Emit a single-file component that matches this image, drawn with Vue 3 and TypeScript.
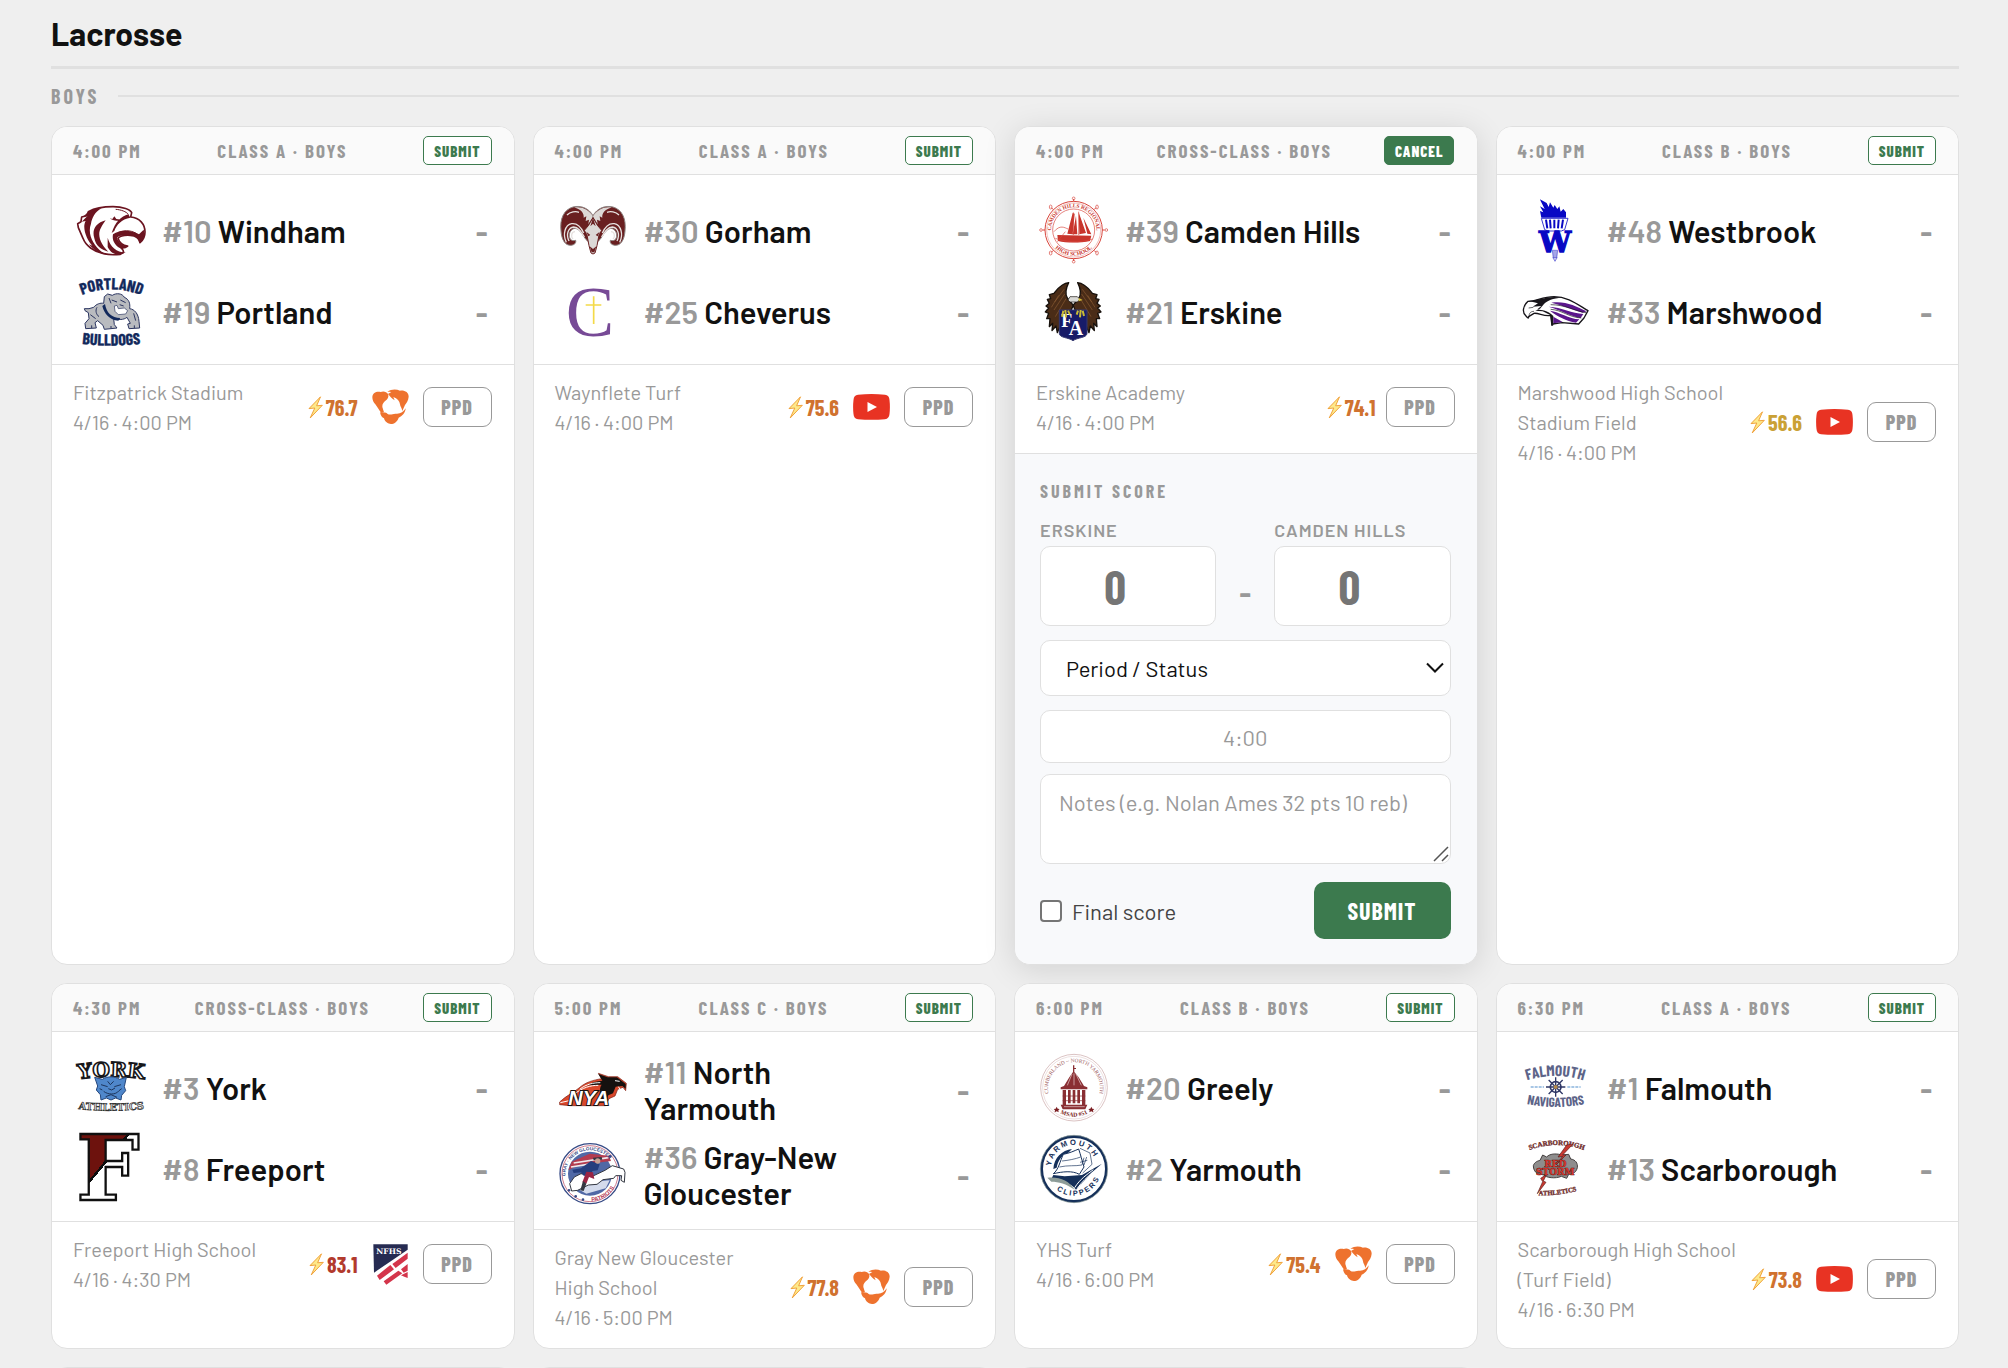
<script setup lang="ts">
import { ref } from 'vue'

type Stream = 'hudl' | 'youtube' | 'nfhs' | null

interface Team {
  rank: number
  name: string
  logo: string
}

interface Game {
  id: number
  time: string
  group: string
  away: Team
  home: Team
  venue: string
  rating: string
  heat: 'warm' | 'hot' | 'mild'
  stream: Stream
}

const games: Game[] = [
  { id: 1, time: '4:00 PM', group: 'Class A · Boys', away: { rank: 10, name: 'Windham', logo: 'windham' }, home: { rank: 19, name: 'Portland', logo: 'portland' }, venue: 'Fitzpatrick Stadium', rating: '76.7', heat: 'warm', stream: 'hudl' },
  { id: 2, time: '4:00 PM', group: 'Class A · Boys', away: { rank: 30, name: 'Gorham', logo: 'gorham' }, home: { rank: 25, name: 'Cheverus', logo: 'cheverus' }, venue: 'Waynflete Turf', rating: '75.6', heat: 'warm', stream: 'youtube' },
  { id: 3, time: '4:00 PM', group: 'Cross-Class · Boys', away: { rank: 39, name: 'Camden Hills', logo: 'camden' }, home: { rank: 21, name: 'Erskine', logo: 'erskine' }, venue: 'Erskine Academy', rating: '74.1', heat: 'warm', stream: null },
  { id: 4, time: '4:00 PM', group: 'Class B · Boys', away: { rank: 48, name: 'Westbrook', logo: 'westbrook' }, home: { rank: 33, name: 'Marshwood', logo: 'marshwood' }, venue: 'Marshwood High School Stadium Field', rating: '56.6', heat: 'mild', stream: 'youtube' },
  { id: 5, time: '4:30 PM', group: 'Cross-Class · Boys', away: { rank: 3, name: 'York', logo: 'york' }, home: { rank: 8, name: 'Freeport', logo: 'freeport' }, venue: 'Freeport High School', rating: '83.1', heat: 'hot', stream: 'nfhs' },
  { id: 6, time: '5:00 PM', group: 'Class C · Boys', away: { rank: 11, name: 'North Yarmouth', logo: 'nya' }, home: { rank: 36, name: 'Gray-New Gloucester', logo: 'gray' }, venue: 'Gray New Gloucester High\u00a0School', rating: '77.8', heat: 'warm', stream: 'hudl' },
  { id: 7, time: '6:00 PM', group: 'Class B · Boys', away: { rank: 20, name: 'Greely', logo: 'greely' }, home: { rank: 2, name: 'Yarmouth', logo: 'yarmouth' }, venue: 'YHS Turf', rating: '75.4', heat: 'warm', stream: 'hudl' },
  { id: 8, time: '6:30 PM', group: 'Class A · Boys', away: { rank: 1, name: 'Falmouth', logo: 'falmouth' }, home: { rank: 13, name: 'Scarborough', logo: 'scarborough' }, venue: 'Scarborough High School (Turf Field)', rating: '73.8', heat: 'warm', stream: 'youtube' },
]

const upcomingSlots = [9, 10, 11]

const openId = ref<number | null>(3)
const toggle = (id: number) => {
  openId.value = openId.value === id ? null : id
}

const slab = 'font-family="DejaVu Serif, serif" font-weight="700"'
const roman = 'font-family="Liberation Serif, serif" font-weight="700"'
const sans = 'font-family="Liberation Sans, sans-serif" font-weight="700"'
const narrow = 'font-family="Barlow Condensed, sans-serif" font-weight="700"'

/* School crests, all on a 204 unit square. */
const logos: Record<string, string> = {
  windham: `
    <path fill="#fff" stroke="#6b1420" stroke-width="5" stroke-linejoin="round" d="M34 44C60 30 88 29 108 29C138 29 160 38 164 47L161 60C188 62 204 82 204 105C204 118 198 130 189 137C187 124 178 116 160 115C144 114 128 118 123 124C128 140 140 146 152 147C146 152 138 153 132 152C138 160 146 165 130 172C112 174 96 174 80 170C50 164 26 146 18 124L4 92L2 80L12 74L14 60L30 56Z"/>
    <path fill="#6b1420" d="M60 34C46 38 36 44 34 44L20 58L32 56L14 74L26 72C14 92 30 130 46 146L36 142C50 160 70 172 90 173L74 164C50 146 30 112 42 80C46 62 52 46 74 34ZM86 70C56 78 44 98 52 124C56 146 72 158 94 164C74 144 58 116 72 92C76 84 80 78 86 70ZM98 64C108 72 122 74 134 68L118 66L112 58L106 66ZM154 52C132 58 114 76 104 108L112 102C118 84 134 66 160 62ZM108 112C128 98 160 98 186 112L200 98C206 118 198 130 188 139L182 124C166 110 130 112 120 122C126 138 138 146 152 148L130 154C116 146 104 132 108 112ZM92 122C100 150 118 166 146 166C126 178 104 174 92 150Z"/>
    <path fill="none" stroke="#6b1420" stroke-width="3" d="M116 37C132 38 148 44 154 52M124 106C146 98 168 100 184 114"/>`,
  portland: `
    <defs><path id="pt" d="M4 56Q103 12 204 56"/><path id="pb" d="M0 196Q103 210 206 196"/></defs>
    <text fill="#12295c" stroke="#12295c" stroke-width="1" ${narrow} font-size="48" text-anchor="middle"><textPath href="#pt" startOffset="50%">PORTLAND</textPath></text>
    <path fill="#b9bbbf" stroke="#2b3560" stroke-width="3" stroke-linejoin="round" d="M34 104L24 98L22 92L36 92L50 88C58 78 70 74 80 76L82 56L92 48L106 52C118 44 136 46 142 58C156 64 160 76 158 92C172 94 184 106 186 130L188 150L156 152L152 138L160 136L150 118C140 126 124 126 110 122L112 140L120 150L82 154L78 142L62 128L54 134L58 150L26 152L24 136L36 122Z"/>
    <path fill="#12295c" d="M84 78C88 104 104 120 130 120L124 128C98 126 82 108 76 84Z"/>
    <path fill="#fff" stroke="#2b3560" stroke-width="2" d="M112 84L120 82L124 92L142 90L152 98L146 108L124 110L114 100Z"/>
    <path fill="none" stroke="#2b3560" stroke-width="3" d="M104 66L120 72M130 66L146 74M128 80L140 84M96 60L102 76M40 110L56 122M170 106L176 128M44 142V150M102 144V151M172 142V150M60 88C54 98 58 110 66 116"/>
    <text fill="#12295c" stroke="#12295c" stroke-width="1" ${narrow} font-size="48" text-anchor="middle"><textPath href="#pb" startOffset="50%">BULLDOGS</textPath></text>`,
  gorham: `
    <g><path fill="#691f20" stroke="#8d8482" stroke-width="3" d="M102 56C90 34 66 24 42 30C14 38 2 66 6 102C8 128 18 146 36 145C46 144 52 138 50 130C36 134 28 124 32 108C36 96 48 90 58 98C70 106 74 124 88 134L102 140Z"/>
    <path fill="#dcd8d6" d="M102 58C88 36 66 28 46 32C66 36 76 48 74 62L82 58L80 72L90 68L88 82L100 62Z"/>
    <path fill="none" stroke="#e6e1df" stroke-width="4" d="M22 136C10 112 18 84 38 80C54 78 66 90 74 108M30 132C20 112 28 92 44 90C58 90 66 104 76 120M42 126C34 118 38 104 48 104M60 46C50 42 34 44 24 54"/></g>
    <g transform="matrix(-1 0 0 1 204 0)"><path fill="#691f20" stroke="#8d8482" stroke-width="3" d="M102 56C90 34 66 24 42 30C14 38 2 66 6 102C8 128 18 146 36 145C46 144 52 138 50 130C36 134 28 124 32 108C36 96 48 90 58 98C70 106 74 124 88 134L102 140Z"/>
    <path fill="#dcd8d6" d="M102 58C88 36 66 28 46 32C66 36 76 48 74 62L82 58L80 72L90 68L88 82L100 62Z"/>
    <path fill="none" stroke="#e6e1df" stroke-width="4" d="M22 136C10 112 18 84 38 80C54 78 66 90 74 108M30 132C20 112 28 92 44 90C58 90 66 104 76 120M42 126C34 118 38 104 48 104M60 46C50 42 34 44 24 54"/></g>
    <path fill="#dcd8d6" stroke="#691f20" stroke-width="3" d="M102 62L88 86L76 100L84 114L90 146L96 168L102 171L108 168L114 146L120 114L128 100L116 86Z"/>
    <path fill="#691f20" d="M102 62L94 88L102 80L110 88ZM82 104L94 114L88 118ZM122 104L110 114L116 118ZM92 148L102 156L112 148L106 166H98Z"/>`,
  cheverus: `
    <text x="20" y="173" font-family="Liberation Serif, serif" font-size="218" fill="#774a96">C</text>
    <path fill="none" stroke="#f4da48" stroke-width="5" d="M104 55V138M80 81H127"/>`,
  camden: `
    <defs><path id="ct" d="M36 119A68 68 0 1 1 166 119"/><path id="cb" d="M38 144A78 78 0 0 0 164 144"/></defs>
    <g fill="none" stroke="#d8453c"><circle cx="101" cy="99" r="86" stroke-width="3"/><circle cx="101" cy="99" r="81" stroke-width="1"/><circle cx="101" cy="99" r="63" stroke-width="2"/>
    <path stroke-width="3" d="M101 13V6M101 185V192M15 99H8M187 99H194M40 38L34 32M162 38L168 32M40 160L34 166M162 160L168 166"/>
    <g stroke-width="2"><circle cx="101" cy="4" r="4"/><circle cx="101" cy="194" r="4"/><circle cx="3" cy="99" r="4"/><circle cx="199" cy="99" r="4"/><ellipse cx="32" cy="30" rx="4" ry="6"/><ellipse cx="171" cy="30" rx="4" ry="6"/><ellipse cx="32" cy="168" rx="4" ry="6"/><ellipse cx="171" cy="168" rx="4" ry="6"/></g></g>
    <text fill="#c8352c" ${roman} font-size="16" text-anchor="middle"><textPath href="#ct" startOffset="50%">CAMDEN HILLS REGIONAL</textPath></text>
    <text fill="#c8352c" ${roman} font-size="17" text-anchor="middle"><textPath href="#cb" startOffset="50%">HIGH SCHOOL</textPath></text>
    <path fill="#c8352c" d="M98 48L104 50L98 112L82 110ZM108 56L112 112H98ZM116 46L138 108L118 112ZM130 62L154 112L142 110ZM52 114L154 116L150 132C120 138 80 138 54 132Z"/>
    <path fill="none" stroke="#d8453c" stroke-width="2" d="M100 46V114M116 44V114M42 104C60 82 74 92 84 96M46 124C70 134 120 140 158 126M52 134L76 104"/>`,
  erskine: `
    <g fill="#4a2c17" stroke="#17110c" stroke-width="4" stroke-linejoin="round"><path d="M86 14C64 16 52 34 42 46L28 50L32 62L22 64L28 76L18 84L26 90L16 102L26 106L20 122L30 122L28 146L38 136L36 158L48 144L52 164L62 140L92 100L100 82L82 60C74 46 78 30 86 14Z"/><path d="M113 14C135 16 147 34 157 46L171 50L167 62L177 64L171 76L181 84L173 90L183 102L173 106L179 122L169 122L171 146L161 136L163 158L151 144L147 164L137 140L107 100L99 82L117 60C125 46 121 30 113 14Z"/></g>
    <path fill="none" stroke="#8a5a32" stroke-width="2" d="M72 34L44 72M74 48L42 96M78 62L46 116M127 34L155 72M125 48L157 96M121 62L153 116M56 52L34 88M143 52L165 88"/>
    <path fill="#d9d9d6" stroke="#17110c" stroke-width="2" d="M90 56H112L120 64L112 72H90L84 66Z"/><path fill="#d6c134" d="M116 60L128 66L116 70Z"/>
    <path fill="#171b68" stroke="#34386f" stroke-width="3" d="M58 96H141V166C141 180 112 178 99 188C86 178 58 180 58 166Z"/>
    <g fill="#fff" ${roman}><text x="64" y="147" font-size="54">F</text><text x="86" y="170" font-size="60">A</text></g>
    <path fill="none" stroke="#c9bb35" stroke-width="6" d="M70 98L66 116M76 96L78 118M84 98L90 110M114 98L110 110M122 96L120 118M128 98L132 114"/>`,
  westbrook: `
    <path fill="#0808c4" d="M58 62L54 42L64 46L54 28L68 36L56 12L54 7L74 18L80 30L84 16L94 32L98 24L106 36L112 28L116 44L124 36L132 46V62Z"/>
    <path fill="#fff" stroke="#3a3ad0" stroke-width="3" d="M58 64H138L128 98L118 102H78L68 98Z"/>
    <path fill="none" stroke="#0808c4" stroke-width="6" d="M72 68L76 94M84 68L86 94M97 68V94M110 68L108 94M123 68L119 94"/>
    <text x="99" y="164" text-anchor="middle" ${slab} font-size="86" fill="#0808c4" stroke="#0808c4" stroke-width="4">W</text>
    <path fill="#d4d4f4" stroke="#4848cf" stroke-width="2" d="M91 160H107L104 184L99 193L94 184Z"/><path fill="none" stroke="#4848cf" stroke-width="2" d="M96 162V182M102 162V182M92 182H106"/>`,
  marshwood: `
    <path fill="#fff" stroke="#17151a" stroke-width="4" stroke-linejoin="round" d="M18 70C40 72 60 56 96 56C136 56 164 78 198 98L186 120L170 138L120 134L92 138L90 142L86 112C66 116 50 104 36 106L20 116C20 124 16 118 12 114C0 104 2 84 18 70Z"/>
    <path fill="#17151a" d="M18 68C50 70 80 50 120 60C92 60 76 68 66 78L54 92L40 98L62 100L86 112L88 142H94V114C76 96 60 98 46 94L58 84L32 86L48 76Z"/>
    <path fill="#5b168c" d="M88 74C130 68 160 84 194 100L182 104C150 94 126 84 88 74ZM80 86C120 88 150 106 184 108L176 120C144 114 120 98 80 86ZM84 98C112 102 140 122 172 124L162 134C132 128 108 116 84 98ZM94 116L122 132L94 136Z"/>
    <path fill="none" stroke="#17151a" stroke-width="2" d="M20 90L34 88M22 116C20 106 26 100 36 100M86 80C130 80 160 100 192 104M86 94C120 96 140 118 178 120"/>`,
  york: `
    <defs><path id="yt" d="M-10 78Q103 58 216 78"/><path id="ya" d="M-10 163Q103 178 216 163"/></defs>
    <text fill="#fff" stroke="#17171a" stroke-width="5" ${slab} font-size="60" text-anchor="middle"><textPath href="#yt" startOffset="50%">YORK</textPath></text>
    <path fill="#4f87cb" stroke="#25477d" stroke-width="3" d="M53 70L76 76C92 66 112 66 128 76L148 70L142 98L146 110L134 124L132 138L116 132L102 138L88 132L72 138L70 122L58 108L62 96Z"/>
    <path fill="none" stroke="#1d355c" stroke-width="3" d="M72 92L92 98M132 92L112 98M92 82L100 92L110 82M94 104L104 108L114 102M80 112C92 122 116 124 126 110M86 128L102 122L120 130M68 104L76 108M134 104L126 110"/>
    <text fill="#ddd" stroke="#333" stroke-width="2" ${slab} font-size="30" text-anchor="middle"><textPath href="#ya" startOffset="50%">ATHLETICS</textPath></text>`,
  freeport: `
    <defs><linearGradient id="ff" gradientUnits="userSpaceOnUse" x1="66" y1="80" x2="89" y2="99"><stop offset="0.4" stop-color="#6d120d"/><stop offset="0.4" stop-color="#0d0d0d"/><stop offset="0.65" stop-color="#0d0d0d"/><stop offset="0.65" stop-color="#fff"/></linearGradient></defs>
    <text x="-2" y="196" ${slab} font-size="268" fill="url(#ff)" stroke="#101010" stroke-width="7">F</text>`,
  nya: `
    <path fill="#d9482b" stroke="#7a1d12" stroke-width="2" d="M2 138C20 120 40 112 60 96C80 78 104 72 128 68L118 52L148 62L176 62L202 82L200 104L192 94L176 100L168 120L150 128L140 149H34L2 146Z"/>
    <path fill="#15110f" d="M118 54L146 64L174 64L200 84V98L190 90L170 92L162 112L148 118L138 140H120C124 110 120 96 128 86L84 88C98 78 112 76 130 74Z"/>
    <path fill="none" stroke="#fff" stroke-width="3" d="M62 100C82 84 104 80 124 80M44 116C70 94 96 88 118 88M168 74L182 76M178 92L186 104M4 140L30 134"/>
    <text x="28" y="146" ${sans} font-style="italic" font-size="60" fill="#fff" stroke="#15110f" stroke-width="6" paint-order="stroke">NYA</text>`,
  gray: `
    <defs><path id="gt" d="M24 130A74 74 0 1 1 164 76"/><path id="gb" d="M84 180A82 82 0 0 0 172 128"/></defs>
    <circle cx="93" cy="98" r="90" fill="#fff" stroke="#374b86" stroke-width="4"/><circle cx="93" cy="98" r="84" fill="none" stroke="#b53a54" stroke-width="2"/>
    <circle cx="93" cy="98" r="66" fill="#5068a5"/>
    <path fill="#b43c4f" d="M38 62L92 38L150 44L156 60L60 72L28 88Z"/><path stroke="#f0e9ec" stroke-width="5" fill="none" d="M44 66L148 50M36 78L100 68"/>
    <path fill="#d4dbec" d="M40 134L82 158L140 142L152 118L96 122Z"/>
    <path fill="#fff" stroke="#333741" stroke-width="3" d="M38 150L32 128L46 108L66 98L100 106L138 88L160 74L194 84L198 94L196 124L186 118L188 104L170 104L164 112L132 116L114 130L88 132L56 148Z"/>
    <path fill="#263e7e" d="M40 86L66 82L96 60L122 70L116 88L100 90L96 106L74 104L66 94L44 96Z"/><path fill="#9b2544" d="M82 92L102 94L106 114L90 108L82 128L70 124Z"/><path fill="#333741" d="M102 50L128 48L130 56L104 58ZM72 120L82 128L74 150L64 148Z"/><circle cx="116" cy="60" r="8" fill="#c7a093"/>
    <text fill="#374b86" ${sans} font-size="14" text-anchor="middle"><textPath href="#gt" startOffset="50%">GRAY · NEW GLOUCESTER</textPath></text>
    <text fill="#b53a54" ${sans} font-size="17" text-anchor="middle"><textPath href="#gb" startOffset="50%">PATRIOTS</textPath></text>
    <g fill="#374b86"><circle cx="30" cy="148" r="4"/><circle cx="50" cy="166" r="4"/><circle cx="72" cy="176" r="4"/><circle cx="154" cy="46" r="4"/></g>`,
  greely: `
    <defs><path id="rt" d="M29 130A78 78 0 1 1 175 130"/><path id="rb" d="M46 168A88 88 0 0 0 158 168"/></defs>
    <g fill="none" stroke="#c9a5a5"><circle cx="102" cy="101" r="100" stroke-width="2"/><circle cx="102" cy="101" r="94" stroke-width="1"/></g>
    <text fill="#9c5a5c" font-family="Liberation Serif, serif" font-size="16" text-anchor="middle"><textPath href="#rt" startOffset="50%">CUMBERLAND ~ NORTH YARMOUTH</textPath></text>
    <text fill="#7c1f23" ${roman} font-size="18" text-anchor="middle"><textPath href="#rb" startOffset="50%">MSAD #51</textPath></text>
    <path fill="#8a2f33" d="M99 34H103V42H108V45H103V54L116 70L132 96L142 100V106H62V100L72 96L88 70L99 54ZM68 108H78V152H68ZM84 108H92V148H84ZM98 108H106V148H98ZM112 108H120V148H112ZM126 108H136V152H126ZM62 152H142L136 166H68Z"/>
    <path fill="none" stroke="#e9cfd0" stroke-width="2" d="M96 60L82 94M102 58V94M108 60L124 94M72 158H134"/><path fill="none" stroke="#8a2f33" stroke-width="2" d="M68 126H136M68 140H136"/>
    <path fill="#7c1f23" d="M50 158l3 6 6 1-4 4 1 6-6-3-6 3 1-6-4-4 6-1ZM154 158l3 6 6 1-4 4 1 6-6-3-6 3 1-6-4-4 6-1Z"/>`,
  yarmouth: `
    <defs><path id="mt" d="M35 114A68 68 0 1 1 168 86"/><path id="mb" d="M38 152A82 82 0 0 0 182 116"/></defs>
    <circle cx="102" cy="102" r="97" fill="#fff" stroke="#15305a" stroke-width="8"/><circle cx="102" cy="102" r="101" fill="none" stroke="#8d9c98" stroke-width="2"/>
    <path fill="#15305a" d="M96 42C66 46 42 68 40 102L50 98C54 76 66 60 84 54ZM40 120L74 124L126 120L186 86L156 112L130 140L108 164C92 144 66 136 32 136Z"/>
    <path fill="#fff" stroke="#15305a" stroke-width="3" d="M70 58C90 54 102 48 116 42C122 60 126 76 132 96L118 118C96 106 68 110 40 116C56 104 60 78 70 58Z"/>
    <path fill="none" stroke="#15305a" stroke-width="2" d="M66 78C86 76 106 72 122 66M58 96C84 90 106 94 126 90M120 40L150 54L156 88L128 114M132 68L126 90M140 66L132 90M120 82L142 76"/>
    <path fill="#8d9c98" d="M22 128C56 124 88 136 104 164C78 146 56 140 34 140Z"/><path fill="none" stroke="#fff" stroke-width="3" d="M104 158C120 132 142 118 160 104M112 160C126 140 142 126 158 112"/>
    <text fill="#15305a" ${sans} text-anchor="middle" font-size="23"><textPath href="#mt" startOffset="50%">Y A R M O U T H</textPath></text>
    <text fill="#15305a" ${sans} font-size="22" text-anchor="middle"><textPath href="#mb" startOffset="50%">C L I P P E R S</textPath></text>`,
  falmouth: `
    <defs><path id="lt" d="M-4 86Q100 46 204 86"/><path id="lb" d="M-4 146Q100 172 206 146"/></defs>
    <text fill="#5d6488" ${narrow} font-size="46" text-anchor="middle"><textPath href="#lt" startOffset="50%">FALMOUTH</textPath></text>
    <text fill="#5d6488" ${narrow} font-size="40" text-anchor="middle"><textPath href="#lb" startOffset="50%">NAVIGATORS</textPath></text>
    <g fill="none" stroke="#2f3766"><circle cx="101" cy="99" r="16" stroke-width="5"/><path stroke-width="4" d="M101 70V128M72 99H130M80 78L122 120M122 78L80 120"/></g><circle cx="101" cy="99" r="6" fill="#b38a4d"/>
    <path fill="none" stroke="#8ab4dd" stroke-width="4" stroke-dasharray="9 3" d="M26 99H66M136 99H176"/>`,
  scarborough: `
    <defs><path id="st" d="M10 50Q104 10 198 50"/><path id="sb" d="M42 180Q104 184 172 166"/></defs>
    <text fill="#6e2a28" stroke="#6e2a28" stroke-width="1" ${roman} font-size="21" text-anchor="middle"><textPath href="#st" startOffset="50%">SCARBOROUGH</textPath></text>
    <path fill="#8e8d8d" stroke="#454040" stroke-width="3" d="M34 92C38 80 48 78 54 76L62 60L74 66C84 54 108 56 120 60L140 58L146 72C160 74 168 84 166 98C162 112 156 116 140 118L134 130L118 124C100 132 72 128 66 120L46 116C38 110 34 102 34 92Z"/>
    <path fill="#c93a31" stroke="#57201d" stroke-width="2" d="M154 26L134 30L108 66L122 64L104 88L132 60L122 60ZM74 118L56 130L62 140L46 176L72 142L64 138Z"/>
    <g fill="#d3342b" stroke="#4c1512" stroke-width="2" paint-order="stroke" ${slab} text-anchor="middle"><text x="100" y="95" font-size="27">RED</text><text x="100" y="119" font-size="27">STORM</text></g>
    <text fill="#6e2a28" stroke="#6e2a28" stroke-width="1" ${roman} font-size="20" text-anchor="middle"><textPath href="#sb" startOffset="50%">ATHLETICS</textPath></text>`,
}
</script>

<template>
  <main class="page">
    <h1 class="sport">Lacrosse</h1>
    <h2 class="division"><span>Boys</span></h2>

    <section class="grid" aria-label="Boys lacrosse games">
      <article v-for="g in games" :key="g.id" class="card" :class="{ open: openId === g.id }">
        <header class="card-head">
          <span>{{ g.time }}</span>
          <span>{{ g.group }}</span>
          <button type="button" class="toggle" :class="{ active: openId === g.id }" @click="toggle(g.id)">
            {{ openId === g.id ? 'Cancel' : 'Submit' }}
          </button>
        </header>

        <div class="teams">
          <div v-for="t in [g.away, g.home]" :key="t.name" class="team">
            <svg class="logo" viewBox="0 0 204 204" role="img" :aria-label="t.name" v-html="logos[t.logo]"></svg>
            <div class="name"><span class="rank">#{{ t.rank }}</span> {{ t.name }}</div>
            <div class="score">–</div>
          </div>
        </div>

        <footer class="card-foot">
          <div class="where">
            <div>{{ g.venue }}</div>
            <div>4/16 · {{ g.time }}</div>
          </div>
          <div class="rating" :class="g.heat">
            <svg class="bolt" viewBox="0 0 15 23" aria-hidden="true">
              <path d="M12.500.8L1 12.600L6.800 12L2.200 22L14.300 9.300L8.600 9.800Z" fill="#fde98a" stroke="#f0a23c" stroke-width="1" stroke-linejoin="round" />
            </svg>
            <span>{{ g.rating }}</span>
          </div>
          <a v-if="g.stream" href="#" class="stream" :aria-label="'Watch on ' + g.stream">
            <svg v-if="g.stream === 'hudl'" width="37" height="36" viewBox="0 0 111 108">
              <g fill="#ee722e">
                <path d="M46 8C58 0 73 0 84 5C98 3 110 10 110 23C109 36 103 42 99 48C96 54 94 60 91 66C90 58 84 52 84 46C83 36 76 28 64 24L68 34C60 30 54 22 48 15L58 9C54 8 50 8 46 8Z" />
                <path d="M1 24C2 11 14 6 26 9C34 5 44 8 48 15C50 20 50 26 44 32C36 38 30 44 31 54L36 70L28 72C20 62 16 54 10 46C4 40 1 32 1 24Z" />
                <path d="M24 70C34 72 40 68 46 74C54 80 62 74 70 74C84 76 94 70 101 58C100 72 90 82 80 86C76 98 66 105 57 105C48 105 38 98 36 88C30 86 26 80 24 70Z" />
              </g>
            </svg>
            <svg v-else-if="g.stream === 'youtube'" width="37" height="26" viewBox="0 0 37 26">
              <path d="M5 .8Q18.500-.6 32 .8Q36.200 1.200 36.500 6Q37.300 13 36.500 20Q36.200 24.600 32 25.200Q18.500 26.500 5 25.200Q.8 24.800.5 20Q-.3 13 .5 6Q.8 1.200 5 .8Z" fill="#e83323" />
              <path d="M14.500 8L24 13L14.500 18Z" fill="#fff" />
            </svg>
            <svg v-else width="35" height="41" viewBox="0 0 105 123">
              <path d="M1 1H104V17L3 86Z" fill="#262b52" />
              <path d="M12 95L52 63L63 76L20 108ZM58 60L104 26V44L68 72ZM32 112L76 80L88 88L40 122ZM84 76L104 60V80L92 86ZM84 94L104 84V102L94 98Z" fill="#d4354b" />
              <text x="10" y="30" font-family="DejaVu Serif, serif" font-weight="700" font-size="23" fill="#fff">NFHS</text>
            </svg>
          </a>
          <button type="button" class="ppd">PPD</button>
        </footer>

        <form v-if="openId === g.id" class="entry" @submit.prevent>
          <h3>Submit Score</h3>
          <div class="points">
            <div class="side">
              <label for="home-score">{{ g.home.name }}</label>
              <input id="home-score" type="number" min="0" placeholder="0" />
            </div>
            <span class="dash">–</span>
            <div class="side">
              <label for="away-score">{{ g.away.name }}</label>
              <input id="away-score" type="number" min="0" placeholder="0" />
            </div>
          </div>
          <div class="select-wrap">
            <select aria-label="Period or status">
              <option>Period / Status</option>
            </select>
            <svg width="18" height="11" viewBox="0 0 18 11" aria-hidden="true"><path d="M1 1.500L9 9.500L17 1.500" fill="none" stroke="#111" stroke-width="2" /></svg>
          </div>
          <input class="clock" type="text" placeholder="4:00" aria-label="Clock" />
          <div class="notes-wrap">
            <textarea placeholder="Notes (e.g. Nolan Ames 32 pts 10 reb)" aria-label="Notes"></textarea>
            <svg width="16" height="16" viewBox="0 0 16 16" aria-hidden="true"><path d="M1 15L15 1M9 15L15 9" stroke="#555" stroke-width="1.500" /></svg>
          </div>
          <div class="finish">
            <label class="final"><input type="checkbox" /> <span>Final score</span></label>
            <button type="submit">Submit</button>
          </div>
        </form>
      </article>

      <article v-for="s in upcomingSlots" :key="s" class="card"><header class="card-head"></header></article>
    </section>
  </main>
</template>

<style>
body {
  background: #efefef;
}
</style>

<style scoped>
* {
  box-sizing: border-box;
}

.page {
  --cond: "Barlow Condensed", "Roboto Condensed", "Liberation Sans Narrow", "Roboto", sans-serif;
  --text: "Barlow", "Roboto", sans-serif;
  --line: #e0e0e0;
  --muted: #999;
  --green: #3c7a4e;
  height: 100vh;
  overflow: hidden;
  padding: 11px 49px 0 51px;
  font-family: var(--text);
  color: #111;
}

button,
input,
select,
textarea {
  font-family: inherit;
  margin: 0;
}

h1,
h2,
h3 {
  margin: 0;
}

.sport {
  padding-bottom: 11px;
  border-bottom: 3px solid var(--line);
  font-size: 32px;
  line-height: 44px;
  font-weight: 700;
}

.division {
  display: flex;
  align-items: center;
  gap: 19px;
  margin: 15px 0 18px;
  font-family: var(--cond);
  font-size: 20px;
  line-height: 24px;
  letter-spacing: 3px;
  text-transform: uppercase;
  color: var(--muted);
}

.division::after {
  content: "";
  flex: 1;
  height: 2px;
  background: var(--line);
}

.grid {
  display: grid;
  grid-template-columns: repeat(4, minmax(0, 1fr));
  gap: 18px;
}

.card {
  border: 1px solid var(--line);
  border-radius: 16px;
  background: #fff;
  overflow: hidden;
}

.card.open {
  box-shadow: 0 5px 32px rgba(0, 0, 0, 0.12);
}

.card-head {
  display: flex;
  justify-content: space-between;
  align-items: center;
  height: 48px;
  padding: 0 22px 0 21px;
  background: #fafafa;
  border-bottom: 1px solid var(--line);
  font-family: var(--cond);
  font-size: 19px;
  line-height: 22px;
  font-weight: 700;
  letter-spacing: 2px;
  text-transform: uppercase;
  color: var(--muted);
}

.toggle {
  height: 29px;
  padding: 0 10px;
  border: 1px solid var(--green);
  border-radius: 5px;
  background: #fff;
  color: var(--green);
  font-size: 15px;
  font-weight: 800;
  letter-spacing: 1px;
  text-transform: uppercase;
}

.toggle.active {
  background: var(--green);
  color: #fff;
}

.teams {
  display: flex;
  flex-direction: column;
  gap: 13px;
  padding: 22px 26px 18px 25px;
}

.team {
  display: flex;
  align-items: center;
  gap: 17px;
}

.logo {
  flex: none;
  width: 68px;
  height: 68px;
  overflow: visible;
}

.name {
  flex: 1;
  font-size: 31px;
  line-height: 36px;
  font-weight: 600;
}

.rank {
  color: var(--muted);
}

.score {
  min-width: 64px;
  text-align: right;
  font-family: var(--cond);
  font-size: 30px;
  font-weight: 700;
  color: var(--muted);
}

.card-foot {
  display: flex;
  align-items: center;
  gap: 10px;
  padding: 12px 22px 16px 21px;
  border-top: 1px solid var(--line);
}

.where {
  flex: 1;
  font-size: 20px;
  line-height: 30px;
  color: var(--muted);
}

.rating {
  display: flex;
  align-items: center;
  gap: 3px;
  font-family: var(--cond);
  font-size: 22px;
  line-height: 26px;
  font-weight: 700;
}

.rating.warm {
  color: #d0722f;
}

.rating.hot {
  color: #b23a2c;
}

.rating.mild {
  color: #caa135;
}

.bolt {
  width: 15px;
  height: 23px;
}

.stream {
  display: flex;
  justify-content: center;
  width: 45px;
}

.ppd {
  width: 69px;
  height: 40px;
  padding: 0;
  border: 1px solid var(--muted);
  border-radius: 9px;
  background: #fff;
  color: var(--muted);
  font-family: var(--cond);
  font-size: 20px;
  font-weight: 800;
  letter-spacing: 1px;
}

.entry {
  padding: 25px 26px 25px 25px;
  border-top: 1px solid var(--line);
  background: #f8f9fb;
}

.entry h3 {
  font-family: var(--cond);
  font-size: 18px;
  line-height: 24px;
  letter-spacing: 3px;
  text-transform: uppercase;
  color: var(--muted);
}

.points {
  display: flex;
  align-items: flex-end;
  margin-top: 15px;
}

.side {
  flex: 1;
  min-width: 0;
}

.side label {
  display: block;
  font-size: 18px;
  line-height: 24px;
  font-weight: 600;
  letter-spacing: 1px;
  text-transform: uppercase;
  color: var(--muted);
}

.side input {
  display: block;
  width: 100%;
  height: 80px;
  margin-top: 4px;
  padding: 0 36px 0 10px;
  border: 1px solid var(--line);
  border-radius: 10px;
  background: #fff;
  font-family: var(--cond);
  font-size: 48px;
  font-weight: 700;
  text-align: center;
  appearance: textfield;
}

.side input::-webkit-inner-spin-button {
  display: none;
}

.side input::placeholder {
  color: #757575;
}

.dash {
  width: 58px;
  text-align: center;
  font-family: var(--cond);
  font-size: 30px;
  line-height: 68px;
  font-weight: 700;
  color: var(--muted);
}

.select-wrap,
.notes-wrap {
  position: relative;
}

.select-wrap svg {
  position: absolute;
  right: 7px;
  top: 22px;
  pointer-events: none;
}

.notes-wrap svg {
  position: absolute;
  right: 2px;
  bottom: 2px;
  pointer-events: none;
}

select,
.clock,
textarea {
  display: block;
  width: 100%;
  border: 1px solid var(--line);
  border-radius: 10px;
  background: #fff;
  font-size: 22px;
  color: #111;
}

select {
  height: 56px;
  margin-top: 14px;
  padding: 0 25px;
  appearance: none;
}

.clock {
  height: 53px;
  margin-top: 14px;
  padding: 0 19px;
  text-align: center;
}

textarea {
  height: 90px;
  margin-top: 11px;
  padding: 14px 18px;
  line-height: 26px;
  resize: none;
}

.clock::placeholder,
textarea::placeholder {
  color: var(--muted);
}

.finish {
  display: flex;
  justify-content: space-between;
  align-items: center;
  padding-top: 18px;
}

.final {
  display: flex;
  align-items: center;
  gap: 10px;
  font-size: 22px;
  color: #444;
}

.final input {
  appearance: none;
  width: 22px;
  height: 22px;
  border: 2px solid #757575;
  border-radius: 4px;
  background: #fff;
}

.finish button {
  width: 137px;
  height: 57px;
  border: 0;
  border-radius: 10px;
  background: var(--green);
  color: #fff;
  font-family: var(--cond);
  font-size: 24px;
  font-weight: 700;
  letter-spacing: 1px;
  text-transform: uppercase;
}
</style>
